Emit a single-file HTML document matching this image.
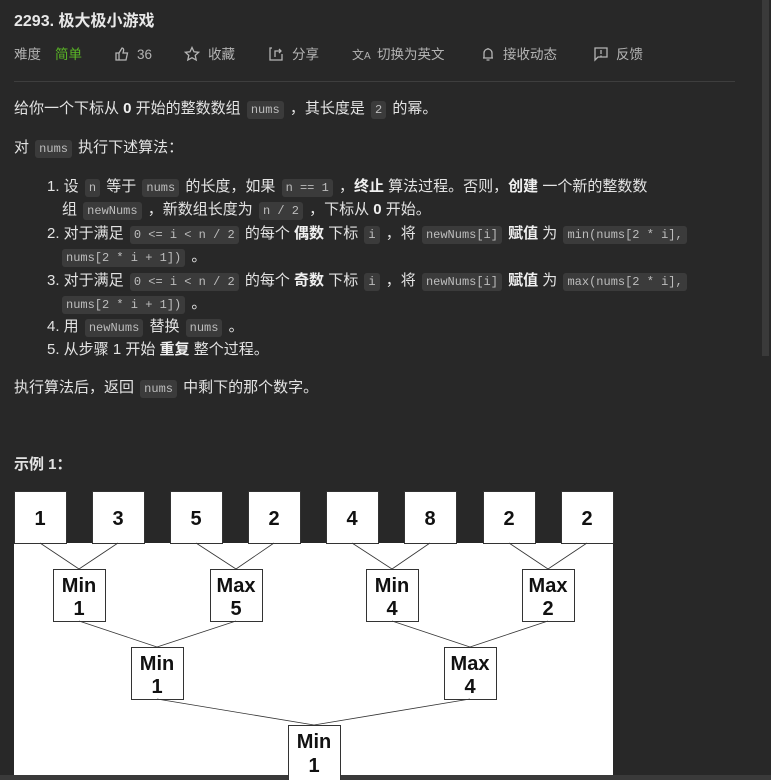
<!DOCTYPE html>
<html><head><meta charset="utf-8"><style>
body{margin:0;width:771px;height:780px;background:#282828;overflow:hidden;position:relative;font-family:"Liberation Sans","Noto Sans CJK SC",sans-serif;color:#e3e3e3;font-size:15px}
.a{position:absolute;white-space:nowrap;line-height:20px}
code{font-family:"Liberation Mono","DejaVu Sans Mono",monospace;font-size:12px;background:#3b3b3b;color:#bdbdbd;border-radius:3px;padding:2px 4px;margin:0 2px}
b{font-weight:bold;color:#f0f0f0}
.m{position:absolute;top:46px;font-size:13.5px;color:#b4b4b4;line-height:18px}
svg.i{position:absolute;top:46px}
</style></head><body>
<div class="a" style="left:14px;top:12px;font-size:16px;font-weight:bold;color:#e8e8e8">2293. 极大极小游戏</div>
<div class="m" style="left:14px">难度</div>
<div class="m" style="left:55px;color:#5ab726">简单</div>
<svg class="i" style="left:114px" width="16" height="16" viewBox="0 0 16 16" fill="none" stroke="#b4b4b4" stroke-width="1.3"><path d="M2 7h3v7H2zM5 7l3-5c1 0 2 1 1.5 3L9 7h4.5l-1.5 7H5"/></svg>
<div class="m" style="left:137px">36</div>
<svg class="i" style="left:184px" width="16" height="16" viewBox="0 0 16 16" fill="none" stroke="#b4b4b4" stroke-width="1.3"><path d="M8 1.5l2 4.3 4.6.5-3.4 3.1 1 4.6L8 11.7 3.8 14l1-4.6L1.4 6.3 6 5.8z"/></svg>
<div class="m" style="left:208px">收藏</div>
<svg class="i" style="left:268px" width="16" height="16" viewBox="0 0 16 16" fill="none" stroke="#b4b4b4" stroke-width="1.3"><path d="M4 2H2v12h12V8M7 11V5h6M11 3l2 2-2 2"/></svg>
<div class="m" style="left:292px">分享</div>
<div class="m" style="left:352px;font-size:12px">文<span style="font-size:10px">A</span></div>
<div class="m" style="left:377px">切换为英文</div>
<svg class="i" style="left:480px" width="16" height="16" viewBox="0 0 16 16" fill="none" stroke="#b4b4b4" stroke-width="1.3"><path d="M4 12V7a4 4 0 018 0v5H3h10M6.5 14h3M8 2v1"/></svg>
<div class="m" style="left:503px">接收动态</div>
<svg class="i" style="left:593px" width="16" height="16" viewBox="0 0 16 16" fill="none" stroke="#b4b4b4" stroke-width="1.3"><path d="M2 2h12v9H5l-3 3zM8 4v4M8 9.5v1"/></svg>
<div class="m" style="left:616px">反馈</div>
<div style="position:absolute;left:14px;top:81px;width:721px;height:1px;background:#3e3e3e"></div>
<div style="position:absolute;left:762px;top:0;width:7px;height:356px;background:#3a3a3a"></div>

<div class="a" style="left:14px;top:99px">给你一个下标从 <b>0</b> 开始的整数数组 <code>nums</code> ，其长度是 <code>2</code> 的幂。</div>
<div class="a" style="left:14px;top:138px">对 <code>nums</code> 执行下述算法：</div>
<div class="a" style="left:47px;top:177px">1. 设 <code>n</code> 等于 <code>nums</code> 的长度，如果 <code>n == 1</code> ，<b>终止</b> 算法过程。否则，<b>创建</b> 一个新的整数数</div>
<div class="a" style="left:62px;top:200px">组 <code>newNums</code> ，新数组长度为 <code>n / 2</code> ，下标从 <b>0</b> 开始。</div>
<div class="a" style="left:47px;top:224px">2. 对于满足 <code>0 &lt;= i &lt; n / 2</code> 的每个 <b>偶数</b> 下标 <code>i</code> ，将 <code>newNums[i]</code> <b>赋值</b> 为 <code>min(nums[2 * i],</code></div>
<div class="a" style="left:60px;top:247px"><code>nums[2 * i + 1])</code> 。</div>
<div class="a" style="left:47px;top:271px">3. 对于满足 <code>0 &lt;= i &lt; n / 2</code> 的每个 <b>奇数</b> 下标 <code>i</code> ，将 <code>newNums[i]</code> <b>赋值</b> 为 <code>max(nums[2 * i],</code></div>
<div class="a" style="left:60px;top:294px"><code>nums[2 * i + 1])</code> 。</div>
<div class="a" style="left:47px;top:317px">4. 用 <code>newNums</code> 替换 <code>nums</code> 。</div>
<div class="a" style="left:47px;top:340px">5. 从步骤 1 开始 <b>重复</b> 整个过程。</div>
<div class="a" style="left:14px;top:378px">执行算法后，返回 <code>nums</code> 中剩下的那个数字。</div>
<div class="a" style="left:14px;top:455px;font-weight:bold">示例 1：</div>

<svg style="position:absolute;left:0;top:0" width="771" height="780" font-family="Liberation Sans Narrow,Liberation Sans,sans-serif" font-weight="bold" font-size="20" text-anchor="middle">
<rect x="14" y="543" width="599" height="232" fill="#fff"/>
<rect x="0" y="775" width="771" height="5" fill="#3a3a3a"/>
<g fill="#fff" stroke="#333" stroke-width="1">
<rect x="14.5" y="491.5" width="52" height="52"/><rect x="92.5" y="491.5" width="52" height="52"/>
<rect x="170.5" y="491.5" width="52" height="52"/><rect x="248.5" y="491.5" width="52" height="52"/>
<rect x="326.5" y="491.5" width="52" height="52"/><rect x="404.5" y="491.5" width="52" height="52"/>
<rect x="483.5" y="491.5" width="52" height="52"/><rect x="561.5" y="491.5" width="52" height="52"/>
<rect x="53.5" y="569.5" width="52" height="52"/><rect x="210.5" y="569.5" width="52" height="52"/>
<rect x="366.5" y="569.5" width="52" height="52"/><rect x="522.5" y="569.5" width="52" height="52"/>
<rect x="131.5" y="647.5" width="52" height="52"/><rect x="444.5" y="647.5" width="52" height="52"/>
<rect x="288.5" y="725.5" width="52" height="60"/>
</g>
<g stroke="#333" stroke-width="0.8">
<line x1="40" y1="543" x2="79" y2="569"/><line x1="118" y1="543" x2="79" y2="569"/>
<line x1="196" y1="543" x2="236" y2="569"/><line x1="274" y1="543" x2="236" y2="569"/>
<line x1="352" y1="543" x2="392" y2="569"/><line x1="430" y1="543" x2="392" y2="569"/>
<line x1="509" y1="543" x2="548" y2="569"/><line x1="587" y1="543" x2="548" y2="569"/>
<line x1="79" y1="621" x2="157" y2="647"/><line x1="236" y1="621" x2="157" y2="647"/>
<line x1="392" y1="621" x2="470" y2="647"/><line x1="548" y1="621" x2="470" y2="647"/>
<line x1="157" y1="699" x2="314" y2="725"/><line x1="470" y1="699" x2="314" y2="725"/>
</g>
<g fill="#111">
<text x="40" y="525">1</text><text x="118" y="525">3</text><text x="196" y="525">5</text><text x="274" y="525">2</text>
<text x="352" y="525">4</text><text x="430" y="525">8</text><text x="509" y="525">2</text><text x="587" y="525">2</text>
<text x="79" y="592">Min</text><text x="79" y="615">1</text>
<text x="236" y="592">Max</text><text x="236" y="615">5</text>
<text x="392" y="592">Min</text><text x="392" y="615">4</text>
<text x="548" y="592">Max</text><text x="548" y="615">2</text>
<text x="157" y="670">Min</text><text x="157" y="693">1</text>
<text x="470" y="670">Max</text><text x="470" y="693">4</text>
<text x="314" y="748">Min</text><text x="314" y="772">1</text>
</g>
</svg>
</body></html>
